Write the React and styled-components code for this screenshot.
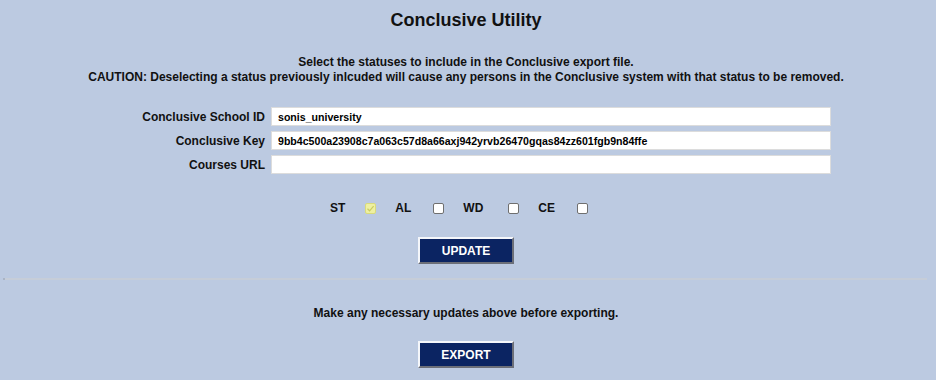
import styled, { createGlobalStyle } from "styled-components";

const GlobalStyle = createGlobalStyle`
  html, body {
    margin: 0;
    padding: 0;
    background: #bccae1;
  }
  body {
    font-family: "Liberation Sans", Arial, sans-serif;
    color: #111;
  }
`;

const statuses = [
  { code: "ST", checked: true, gap: 20 },
  { code: "AL", checked: false, gap: 22 },
  { code: "WD", checked: false, gap: 25 },
  { code: "CE", checked: false, gap: 22 },
];

function App() {
  return (
    <>
      <GlobalStyle />
      <Page>
        <Title>Conclusive Utility</Title>
        <Notice $top={24}>
          Select the statuses to include in the Conclusive export file.
          <br />
          CAUTION: Deselecting a status previously inlcuded will cause any
          persons in the Conclusive system with that status to be removed.
        </Notice>

        <Form>
          <Label>Conclusive School ID</Label>
          <Field defaultValue="sonis_university" />
          <Label>Conclusive Key</Label>
          <Field defaultValue="9bb4c500a23908c7a063c57d8a66axj942yrvb26470gqas84zz601fgb9n84ffe" />
          <Label>Courses URL</Label>
          <Field defaultValue="" />
        </Form>

        <StatusRow>
          {statuses.map((s) => (
            <Status key={s.code} $gap={s.gap}>
              <span>{s.code}</span>
              <Box $checked={s.checked}>
                {s.checked && (
                  <svg width="9" height="9" viewBox="0 0 9 9">
                    <path
                      d="M1.5 4.8 L3.6 6.8 L7.6 2.2"
                      fill="none"
                      stroke="#c9cb62"
                      strokeWidth="1.2"
                    />
                  </svg>
                )}
              </Box>
            </Status>
          ))}
        </StatusRow>

        <Button $top={21}>UPDATE</Button>
        <Rule />
        <Notice $top={26}>Make any necessary updates above before exporting.</Notice>
        <Button $top={20}>EXPORT</Button>
      </Page>
    </>
  );
}
export default App;

const Page = styled.div`
  width: 936px;
  height: 380px;
  padding: 9px 4px 0 0;
  box-sizing: border-box;
  display: flex;
  flex-direction: column;
  align-items: center;
  overflow: hidden;
`;

const Title = styled.h1`
  margin: 0;
  font-size: 18px;
  line-height: 22px;
  font-weight: bold;
`;

const Notice = styled.p`
  margin: ${(p) => p.$top}px 0 0;
  font-size: 12px;
  line-height: 15px;
  font-weight: bold;
  text-align: center;
`;

const Form = styled.div`
  align-self: flex-start;
  margin-top: 22px;
  display: grid;
  grid-template-columns: 265px 560px;
  column-gap: 6px;
  row-gap: 5px;
  align-items: center;
`;

const Label = styled.label`
  text-align: right;
  font-size: 12px;
  font-weight: bold;
`;

const Field = styled.input`
  height: 19px;
  box-sizing: border-box;
  border: 1px solid #dcdcdc;
  background: #fff;
  padding: 0 6px;
  font-family: "Liberation Sans", Arial, sans-serif;
  font-size: 10.6px;
  font-weight: bold;
  color: #000;
  outline: none;
`;

const StatusRow = styled.div`
  margin-top: 26px;
  padding-right: 14px;
  height: 16px;
  display: flex;
  align-items: center;
  gap: 19px;
`;

const Status = styled.div`
  display: flex;
  align-items: center;
  gap: ${(p) => p.$gap}px;
  font-size: 12px;
  font-weight: bold;
`;

const Box = styled.span`
  width: 11px;
  height: 11px;
  box-sizing: border-box;
  display: flex;
  align-items: center;
  justify-content: center;
  border: 1px solid ${(p) => (p.$checked ? "#d8da7c" : "#6f6f6f")};
  border-radius: 2px;
  background: ${(p) => (p.$checked ? "#eef0a0" : "#fff")};
`;

const Button = styled.button`
  margin-top: ${(p) => p.$top}px;
  width: 96px;
  height: 27px;
  box-sizing: border-box;
  background: #0b2462;
  color: #fff;
  font-family: "Liberation Sans", Arial, sans-serif;
  font-size: 12px;
  font-weight: bold;
  border: 2px solid;
  border-color: #f4f6fa #6c6f78 #6c6f78 #f4f6fa;
  padding: 0;
  cursor: pointer;
`;

const Rule = styled.div`
  align-self: stretch;
  margin: 14px 5px 0 3px;
  height: 2px;
  background: #c6cdd8;
  border-left: 2px solid #a9b4c6;
`;
